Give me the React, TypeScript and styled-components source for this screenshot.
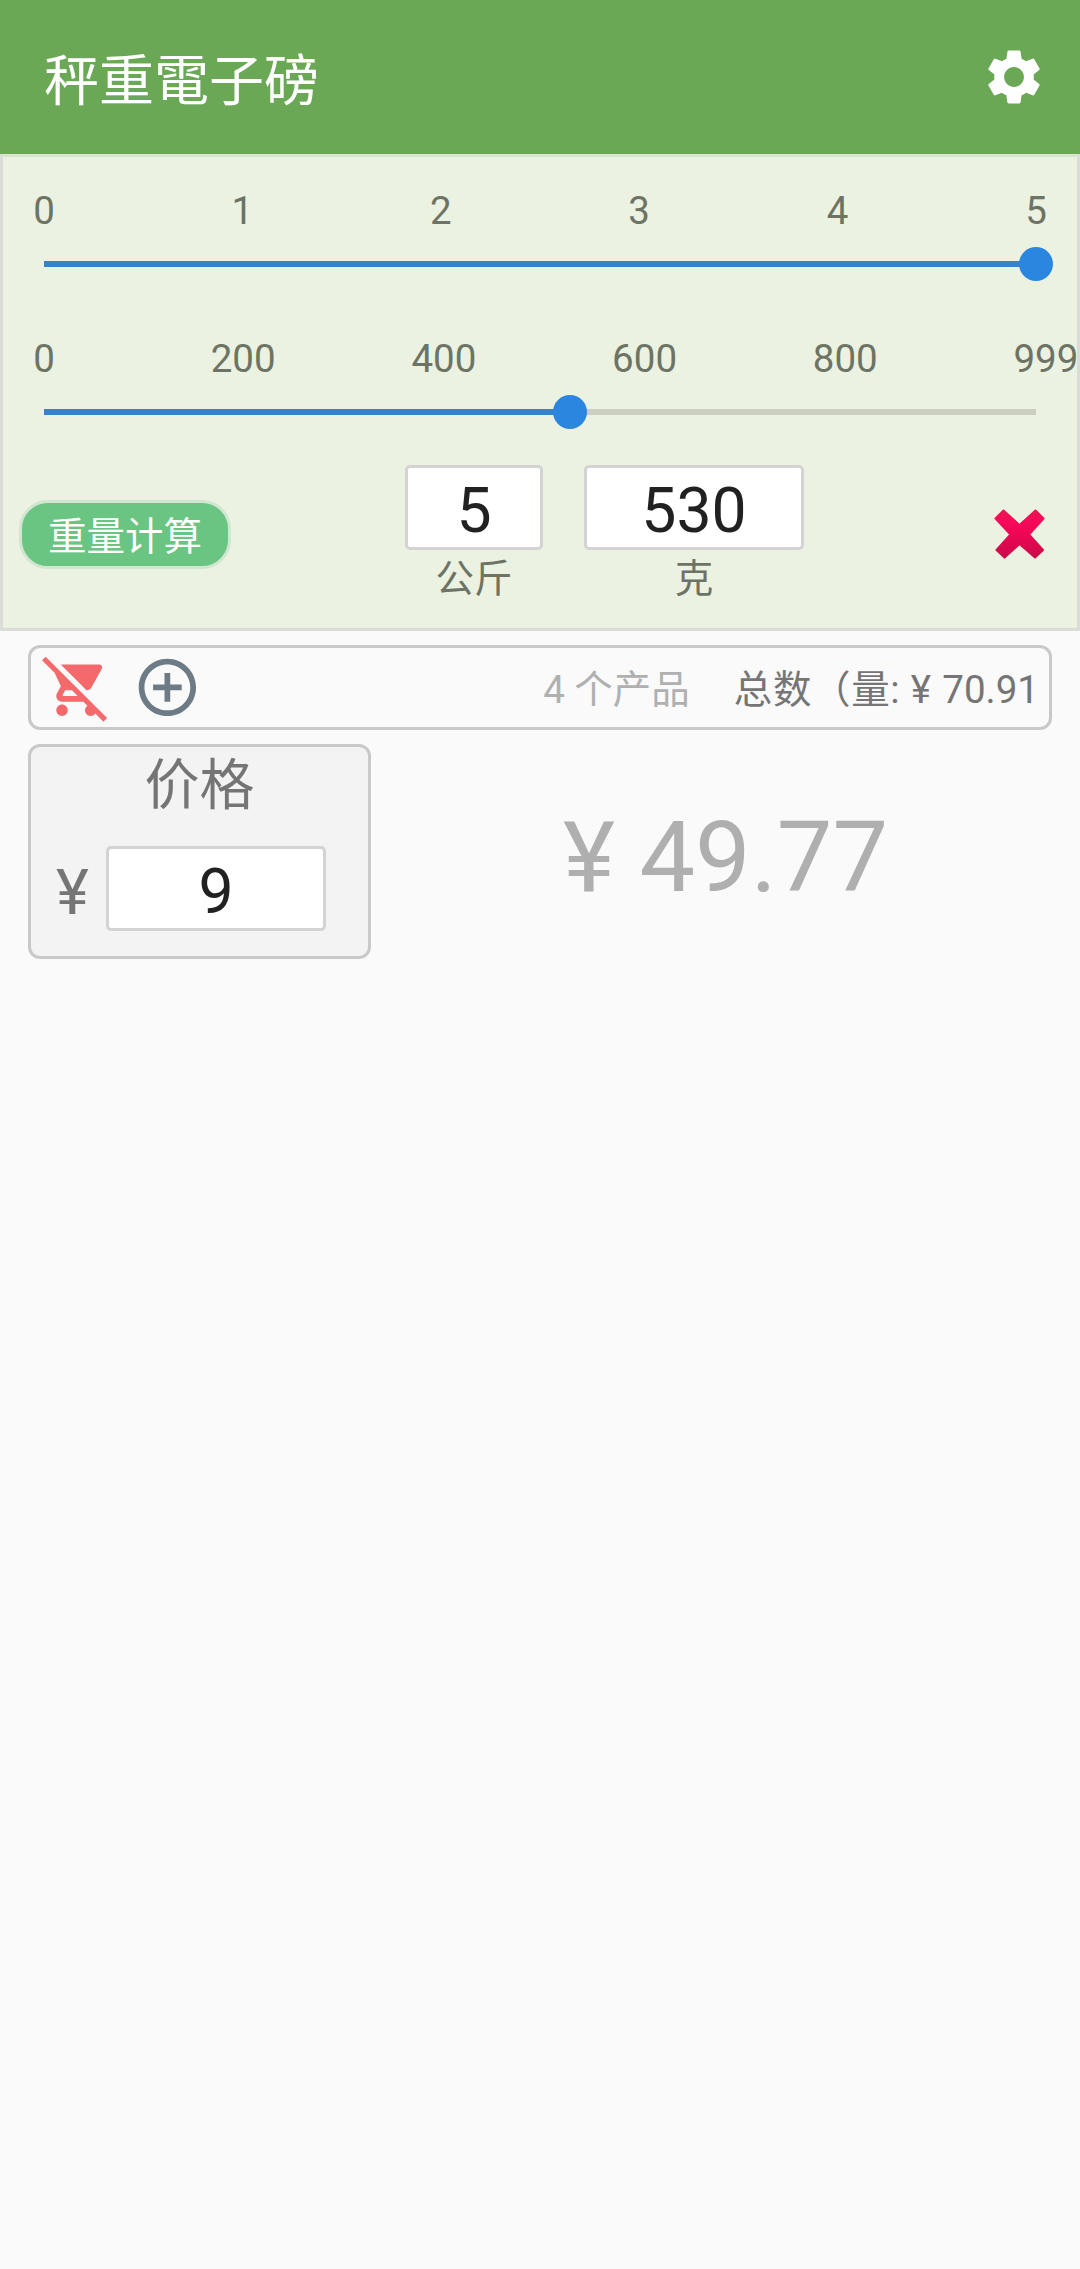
import React from "react";
import styled, { createGlobalStyle } from "styled-components";

const GlobalStyle = createGlobalStyle`
  *, *::before, *::after { box-sizing: border-box; }
  html, body { margin: 0; padding: 0; background: #fafafa; overflow-x: hidden; }
  body, input, button {
    font-family: Roboto, "Noto Sans CJK SC", sans-serif;
    font-weight: 400;
  }
`;

const Screen = styled.div`
  display: flex;
  flex-direction: column;
  width: 1080px;
  min-height: 2269px;
  background: #fafafa;
  color: #757575;
  font-size: 38.5px;
  line-height: 46px;
`;

const Header = styled.header`
  display: flex;
  align-items: center;
  justify-content: space-between;
  height: 154px;
  padding: 0 33px 0 44px;
  background: #6aa855;
`;

const Title = styled.h1`
  margin: 0;
  padding-top: 8px;
  color: #fff;
  font-size: 55px;
  font-weight: 400;
  line-height: 64px;
  font-family: Roboto, "Noto Sans CJK TC", sans-serif;
`;

const IconButton = styled.button<{ $size: number; $color: string }>`
  display: block;
  flex: none;
  width: ${(p) => p.$size}px;
  height: ${(p) => p.$size}px;
  padding: 0;
  border: 0;
  background: none;
  color: ${(p) => p.$color};

  svg {
    display: block;
    width: 100%;
    height: 100%;
    fill: currentColor;
  }
`;

const WeightPanel = styled.section`
  display: flex;
  flex-direction: column;
  height: 477px;
  padding-top: 31px;
  border: 3px solid #dadcd8;
  border-top-color: #d9e5d2;
  background: #ebf2e1;
  color: #6d7365;
`;

const SliderBlock = styled.div`
  display: flex;
  flex-direction: column;
  gap: 13px;
  margin-bottom: 55px;

  & + & {
    margin-bottom: 36px;
  }
`;

const Scale = styled.div<{ $width: number; $lead: number }>`
  display: flex;
  justify-content: space-between;
  width: ${(p) => p.$width}px;
  height: 46px;
  margin-left: 41px;

  & > :first-child {
    margin-right: ${(p) => -p.$lead}px;
  }
`;

const Tick = styled.span`
  display: flex;
  justify-content: center;
  width: 0;
  white-space: nowrap;
`;

const Track = styled.div`
  display: flex;
  align-items: center;
  width: 992px;
  height: 34px;
  margin-left: 41px;
`;

const Fill = styled.div`
  height: 6px;
  background: #3583cb;
`;

const Thumb = styled.div`
  flex: none;
  width: 34px;
  height: 34px;
  margin: 0 -17px;
  border-radius: 50%;
  background: #2a86de;
  z-index: 1;
`;

const Rest = styled.div`
  flex: 1;
  height: 6px;
  background: #cacfc0;
`;

const EntryRow = styled.div`
  display: flex;
  align-items: flex-start;
  padding: 0 32px 0 16px;
`;

const WeightButton = styled.button`
  width: 212px;
  height: 69px;
  margin: 35px 174px 0 0;
  padding: 5px 0 0;
  border: 3px solid #d0e6d1;
  border-radius: 29px;
  background: #69c581;
  color: #fff;
  font-size: 38.5px;
  line-height: 56px;
  text-align: center;
`;

const Unit = styled.label`
  display: flex;
  flex-direction: column;
  align-items: center;
  gap: 6px;
  margin-right: 41px;
`;

const NumberInput = styled.input<{ $width: number }>`
  width: ${(p) => p.$width}px;
  height: 85px;
  padding: 5px 0 0;
  border: 3px solid #d3d3d3;
  border-radius: 5px;
  outline: none;
  background: #fff;
  color: #212121;
  font-size: 62.5px;
  line-height: 71px;
  text-align: center;
`;

const ClearSlot = styled.div`
  margin: 44px 0 0 auto;
`;

const CartBar = styled.section`
  display: flex;
  align-items: center;
  height: 85px;
  margin: 14px 28px 0;
  padding: 0 10px 0 11px;
  border: 3px solid #c9c9c9;
  border-radius: 12px;
`;

const CartActions = styled.div`
  display: flex;
  gap: 22px;
  margin-right: auto;
`;

const Count = styled.span`
  padding-top: 5px;
  color: #b0b0b0;
`;

const Sum = styled.span`
  margin-left: 44px;
  padding-top: 5px;
  white-space: pre;
  word-spacing: 1.7px;
`;

const SumLabel = styled.span`
  letter-spacing: 0.6px;
`;

const PriceRow = styled.section`
  display: flex;
  margin: 14px 0 0 28px;
`;

const PriceCard = styled.div`
  width: 343px;
  height: 215px;
  padding-top: 6px;
  border: 3px solid #c9c9c9;
  border-radius: 12px;
  background: #f3f3f3;
`;

const PriceTitle = styled.h2`
  margin: 0 0 29px;
  font-size: 55px;
  font-weight: 400;
  line-height: 64px;
  text-align: center;
`;

const PriceEntry = styled.label`
  display: flex;
  align-items: center;
  padding-left: 25px;
`;

const Currency = styled.span`
  width: 50px;
  padding-top: 7px;
  font-size: 62.5px;
  line-height: 71px;
`;

const ProductTotal = styled.output`
  display: flex;
  flex: 1;
  align-items: center;
  justify-content: center;
  padding-top: 11px;
  color: #afafaf;
  font-size: 99px;
  line-height: 116px;
`;

const SettingsIcon = () => (
  <svg viewBox="0 0 24 24">
    <path d="M19.14 12.94c.04-.3.06-.61.06-.94 0-.32-.02-.64-.07-.94l2.03-1.58c.18-.14.23-.41.12-.61l-1.92-3.32c-.12-.22-.37-.29-.59-.22l-2.39.96c-.5-.38-1.03-.7-1.62-.94l-.36-2.54c-.04-.24-.24-.41-.48-.41h-3.84c-.24 0-.43.17-.47.41l-.36 2.54c-.59.24-1.13.57-1.62.94l-2.39-.96c-.22-.08-.47 0-.59.22L2.74 8.87c-.12.21-.08.47.12.61l2.03 1.58c-.05.3-.09.63-.09.94s.02.64.07.94l-2.03 1.58c-.18.14-.23.41-.12.61l1.92 3.32c.12.22.37.29.59.22l2.39-.96c.5.38 1.03.7 1.62.94l.36 2.54c.05.24.24.41.48.41h3.84c.24 0 .44-.17.47-.41l.36-2.54c.59-.24 1.13-.56 1.62-.94l2.39.96c.22.08.47 0 .59-.22l1.92-3.32c.12-.22.07-.47-.12-.61l-2.01-1.58zM12 15.6c-1.98 0-3.6-1.62-3.6-3.6s1.62-3.6 3.6-3.6 3.6 1.62 3.6 3.6-1.62 3.6-3.6 3.6z" />
  </svg>
);

const RemoveCartIcon = () => (
  <svg viewBox="0 0 24 24">
    <path d="M22.73 22.73L2.77 2.77 2 2l-.73-.73L0 2.54l4.39 4.39 2.21 4.66-1.35 2.45c-.16.28-.25.61-.25.96 0 1.1.9 2 2 2h7.46l1.38 1.38c-.5.36-.83.95-.83 1.62 0 1.1.89 2 1.99 2 .67 0 1.26-.33 1.62-.84L21.46 24l1.27-1.27zM7.42 15c-.14 0-.25-.11-.25-.25l.03-.12.9-1.63h2.36l2 2H7.42zm8.13-2c.75 0 1.41-.41 1.75-1.03l3.58-6.49c.08-.14.12-.31.12-.48 0-.55-.45-1-1-1H6.54l9.01 9zM7 18c-1.1 0-1.99.9-1.99 2S5.9 22 7 22s2-.9 2-2-.9-2-2-2z" />
  </svg>
);

const AddIcon = () => (
  <svg viewBox="0 0 24 24">
    <path d="M13 7h-2v4H7v2h4v4h2v-4h4v-2h-4V7zm-1-5C6.48 2 2 6.48 2 12s4.48 10 10 10 10-4.48 10-10S17.52 2 12 2zm0 18c-4.41 0-8-3.59-8-8s3.59-8 8-8 8 3.59 8 8-3.59 8-8 8z" />
  </svg>
);

const CrossIcon = () => (
  <svg viewBox="0 0 51 51">
    <defs>
      <linearGradient id="cross" x1="0" y1="0" x2="0" y2="1">
        <stop offset="0" stopColor="#e6174f" />
        <stop offset="0.2" stopColor="#f70a59" />
        <stop offset="0.5" stopColor="#ee0655" />
        <stop offset="1" stopColor="#c90b48" />
      </linearGradient>
    </defs>
    <path
      d="M9.5 1.5 25.5 16 41.5 1.5 49.5 9.5 35 25.5 49 41 41 48.5 25.5 35 10.5 48.5 2.5 41 16.5 25.5 1.5 9.5Z"
      fill="url(#cross)"
      stroke="url(#cross)"
      strokeWidth="2"
      strokeLinejoin="round"
    />
  </svg>
);

interface SliderProps {
  ticks: number[];
  scaleWidth: number;
  lead?: number;
  value: number;
  max: number;
}

const Slider = ({ ticks, scaleWidth, lead = 0, value, max }: SliderProps) => (
  <SliderBlock>
    <Scale $width={scaleWidth} $lead={lead}>
      {ticks.map((t) => (
        <Tick key={t}>{t}</Tick>
      ))}
    </Scale>
    <Track>
      <Fill style={{ width: `${(value / max) * 100}%` }} />
      <Thumb />
      <Rest />
    </Track>
  </SliderBlock>
);

export default function App() {
  return (
    <Screen>
      <GlobalStyle />
      <Header>
        <Title>秤重電子磅</Title>
        <IconButton $size={66} $color="#fff">
          <SettingsIcon />
        </IconButton>
      </Header>

      <WeightPanel>
        <Slider ticks={[0, 1, 2, 3, 4, 5]} scaleWidth={992} value={5} max={5} />
        <Slider
          ticks={[0, 200, 400, 600, 800, 999]}
          scaleWidth={1002}
          lead={1.5}
          value={530}
          max={999}
        />
        <EntryRow>
          <WeightButton>重量计算</WeightButton>
          <Unit>
            <NumberInput $width={138} defaultValue="5" />
            公斤
          </Unit>
          <Unit>
            <NumberInput $width={220} defaultValue="530" />
            克
          </Unit>
          <ClearSlot>
            <IconButton $size={51} $color="#ee0655">
              <CrossIcon />
            </IconButton>
          </ClearSlot>
        </EntryRow>
      </WeightPanel>

      <CartBar>
        <CartActions>
          <IconButton $size={68.75} $color="#f4696b">
            <RemoveCartIcon />
          </IconButton>
          <IconButton $size={68.75} $color="#6c7b86">
            <AddIcon />
          </IconButton>
        </CartActions>
        <Count>4 个产品</Count>
        <Sum>
          <SumLabel>总数（量</SumLabel>: ¥ 70.91
        </Sum>
      </CartBar>

      <PriceRow>
        <PriceCard>
          <PriceTitle>价格</PriceTitle>
          <PriceEntry>
            <Currency>¥</Currency>
            <NumberInput $width={220} defaultValue="9" />
          </PriceEntry>
        </PriceCard>
        <ProductTotal>¥ 49.77</ProductTotal>
      </PriceRow>
    </Screen>
  );
}
